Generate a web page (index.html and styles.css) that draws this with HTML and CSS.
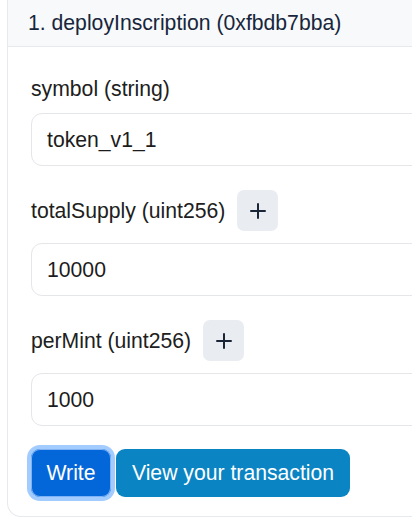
FILE: index.html
```html
<!DOCTYPE html>
<html>
<head>
<meta charset="utf-8">
<link rel="stylesheet" href="styles.css">
</head>
<body>
<div class="viewport">
<div class="card">
  <div class="card-header">1. deployInscription (0xfbdb7bba)</div>
  <div class="card-body">
    <div class="field">
      <div class="label-row"><span class="label">symbol (string)</span></div>
      <div class="input">token_v1_1</div>
    </div>
    <div class="field">
      <div class="label-row"><span class="label">totalSupply (uint256)</span>
        <span class="plus"><svg width="16" height="16" viewBox="0 0 16 16"><path d="M8 1v14M1 8h14" stroke="#1b2538" stroke-width="2" stroke-linecap="round"/></svg></span>
      </div>
      <div class="input">10000</div>
    </div>
    <div class="field">
      <div class="label-row"><span class="label">perMint (uint256)</span>
        <span class="plus"><svg width="16" height="16" viewBox="0 0 16 16"><path d="M8 1v14M1 8h14" stroke="#1b2538" stroke-width="2" stroke-linecap="round"/></svg></span>
      </div>
      <div class="input">1000</div>
    </div>
    <div class="actions">
      <button class="btn btn-write">Write</button>
      <button class="btn btn-view">View your transaction</button>
    </div>
  </div>
</div>
</div>
</body>
</html>
```
FILE: styles.css
```css
html, body {
  margin: 0;
  padding: 0;
  background: #ffffff;
}
body {
  font-family: "Liberation Sans", Arial, sans-serif;
  font-size: 21.2px;
  color: #1f1f1f;
}
.viewport {
  width: 412px;
  height: 518px;
  overflow: hidden;
}
.card {
  margin-left: 7px;
  width: 470px;
  height: 517px;
  border: 1px solid #e6e9ed;
  border-top: none;
  border-radius: 0 0 14px 14px;
  box-sizing: border-box;
  display: flex;
  flex-direction: column;
}
.card-header {
  height: 47px;
  box-sizing: border-box;
  background: #f7f9fb;
  border-bottom: 1px solid #e6e9ed;
  padding-left: 20px;
  display: flex;
  align-items: center;
  color: #17263b;
  line-height: 1;
}
.card-body {
  padding: 30px 0 0 23px;
  display: flex;
  flex-direction: column;
}
.field {
  display: flex;
  flex-direction: column;
  margin-bottom: 24px;
}
.label-row {
  display: flex;
  align-items: center;
  gap: 12px;
  min-height: 24px;
  margin-bottom: 12px;
}
.label {
  color: #202020;
  line-height: 24px;
}
.plus {
  width: 41px;
  height: 41px;
  border-radius: 7px;
  background: #e9ecf0;
  display: flex;
  align-items: center;
  justify-content: center;
}
.input {
  height: 53px;
  box-sizing: border-box;
  border: 1px solid #e4e6ea;
  border-radius: 11px;
  padding-left: 15px;
  display: flex;
  align-items: center;
  color: #1c1c1c;
}
.actions {
  display: flex;
  gap: 5px;
  margin-top: -1px;
}
.btn {
  font-family: "Liberation Sans", Arial, sans-serif;
  font-size: 21.2px;
  color: #ffffff;
  border: none;
  height: 48px;
  border-radius: 9px;
  padding: 0;
  cursor: pointer;
}
.btn-write {
  width: 80px;
  background: #0467d9;
  box-shadow: inset 0 0 0 1px #7fb2f5, 0 0 0 4px #a2cbff;
}
.btn-view {
  width: 234px;
  background: #0a84c3;
}
```
